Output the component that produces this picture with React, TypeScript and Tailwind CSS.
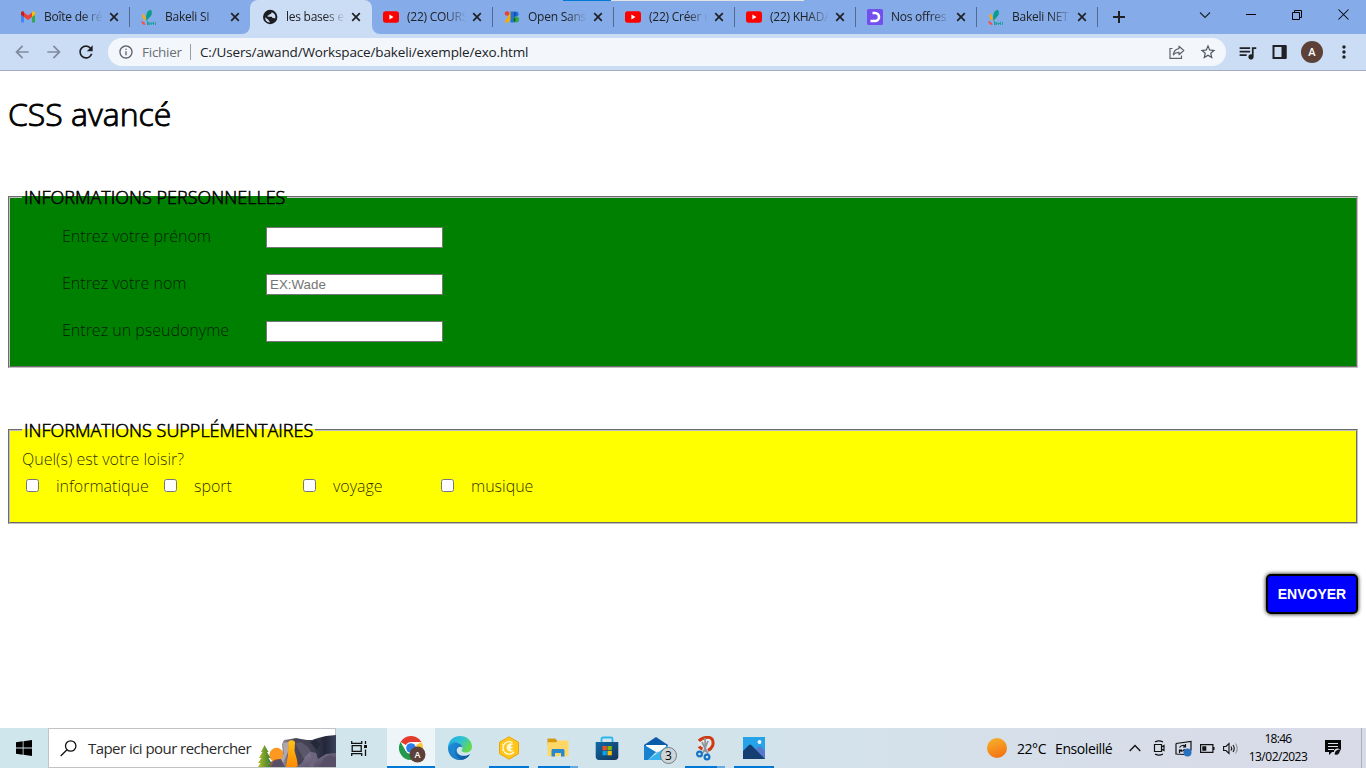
import type { ReactNode } from "react";
import {
  MdArrowBack,
  MdArrowForward,
  MdInfoOutline,
  MdMoreVert,
  MdQueueMusic,
  MdRefresh,
  MdStarBorder,
} from "react-icons/md";

/* ---------- Favicons ---------- */

function GmailIcon() {
  return (
    <svg width="16" height="16" viewBox="0 0 16 16">
      <path d="M1 4.200v8.200c0 .6.400 1 1 1h2V7z" fill="#4285f4" />
      <path d="M15 4.200v8.200c0 .6-.4 1-1 1h-2V7z" fill="#34a853" />
      <path d="M12 4.200V8l3-2.300V4c0-1.400-1.600-2.200-2.700-1.300z" fill="#fbbc04" />
      <path d="M4 8V3.500l4 3 4-3V8l-4 3z" fill="#ea4335" />
      <path d="M1 4v1.700L4 8V3L3.700 2.700C2.600 1.800 1 2.600 1 4z" fill="#c5221f" />
    </svg>
  );
}

function BakeliIcon() {
  return (
    <svg width="16" height="17" viewBox="0 0 16 17">
      <path d="M5.500 12C4.500 7 5.500 1.500 9.500.700c2.500 1.800 1.500 6-1.500 8.300-1 .9-1.800 1.900-2.500 3z" fill="#0a9c8c" />
      <path d="M4.500 12C1.500 10 .500 7.500 2 4.500c2.500 1.500 3 4 2.500 7.500z" fill="#f7a81b" />
      <path d="M4.500 16C2 16 .300 14.500.300 12c2.200.300 3.700 1.500 4.200 4z" fill="#f0544c" />
      <path d="M6.500 12v4M8.500 13.500V16M10.500 13.500V16M12.500 12.500V16M14.500 13v3M6.500 13.500h1.200V16M9 14h1M11 14.500h2" stroke="#1b9d97" strokeWidth=".9" fill="none" />
    </svg>
  );
}

function GlobeIcon() {
  return (
    <svg width="16" height="16" viewBox="0 0 16 16">
      <circle cx="8.200" cy="8" r="7.200" fill="#1b1d21" />
      <path d="M9.500 3.200c.2 1.300-.7 1.900-2 2-.3 1.100-1 1.300-2 1.400l.2 1.200h3.200c.900 0 1.400.5 1.500 1.300h1.300c.800 0 1.300.2 1.600.7a5.200 5.200 0 00-.7-4.600 5 5 0 00-3.100-2z" fill="#cbdcf5" />
      <path d="M3.200 8.200L6.600 11c0 .8.400 1.300 1.200 1.500v.900c-2.800-.1-4.800-2.300-4.600-5.200z" fill="#cbdcf5" />
    </svg>
  );
}

function YoutubeIcon() {
  return (
    <svg width="16" height="16" viewBox="0 0 16 16">
      <rect x="0" y="2.300" width="16" height="11.400" rx="2.600" fill="#f00" />
      <path d="M6.400 5.600v4.800L10.500 8z" fill="#fff" />
    </svg>
  );
}

function GoogleFontsIcon() {
  return (
    <svg width="16" height="16" viewBox="0 0 16 16">
      <path d="M.500 13.500L6.500 2.500H9v4L4.500 13.500z" fill="#f9ab00" />
      <circle cx="3" cy="4.500" r="2.300" fill="#ea4335" />
      <path d="M6.500 2.500h3v11h-3z" fill="#1a73e8" />
      <circle cx="12" cy="5" r="2.600" fill="#1a73e8" />
      <path d="M9.500 2.500a2.800 2.800 0 010 5.600z" fill="#174ea6" />
      <circle cx="12.200" cy="10.600" r="3" fill="#34a853" />
      <path d="M9.500 8a2.800 2.800 0 010 5.500z" fill="#0d652d" />
    </svg>
  );
}

function OffersIcon() {
  return (
    <svg width="16" height="16" viewBox="0 0 16 16">
      <rect width="16" height="16" rx="1.500" fill="#7350ee" />
      <path d="M5.500 4H8a4 4 0 010 8H3.500" fill="none" stroke="#fff" strokeWidth="2.600" />
    </svg>
  );
}

/* ---------- Browser chrome ---------- */

interface TabData {
  title: string;
  icon: ReactNode;
  active?: boolean;
  divider?: boolean;
}

const tabs: TabData[] = [
  { title: "Boîte de ré", icon: <GmailIcon />, divider: true },
  { title: "Bakeli SI", icon: <BakeliIcon /> },
  { title: "les bases e", icon: <GlobeIcon />, active: true },
  { title: "(22) COURS", icon: <YoutubeIcon />, divider: true },
  { title: "Open Sans", icon: <GoogleFontsIcon />, divider: true },
  { title: "(22) Créer u", icon: <YoutubeIcon />, divider: true },
  { title: "(22) KHADA", icon: <YoutubeIcon />, divider: true },
  { title: "Nos offres", icon: <OffersIcon />, divider: true },
  { title: "Bakeli NET", icon: <BakeliIcon />, divider: true },
];

function Tab({ title, icon, active, divider }: TabData) {
  return (
    <div
      className={`relative flex h-[34px] shrink-0 items-center pl-3 ${
        active ? "z-10 -mr-px w-[122px] rounded-t-lg bg-[#cbdcf5]" : "w-[121px]"
      }`}
    >
      <span className="flex w-4 shrink-0 items-center justify-center">{icon}</span>
      <span className="ml-2 w-[59px] shrink-0 overflow-hidden whitespace-nowrap text-[12px] leading-4 tracking-[-0.25px] text-[#202124] [mask-image:linear-gradient(to_right,#000_65%,transparent_100%)]">
        {title}
      </span>
      <svg className="ml-[6px] shrink-0" width="10" height="10" viewBox="0 0 10 10">
        <path d="M1.200 1.200l7.600 7.600M8.800 1.200L1.200 8.800" stroke="#202124" strokeWidth="1.700" />
      </svg>
      {divider && <span className="absolute right-[-1px] top-[7px] h-5 w-px bg-[#54698f]" />}
      {active && (
        <>
          <svg className="absolute bottom-0 left-[-8px]" width="8" height="8" viewBox="0 0 8 8">
            <path d="M8 0v8H0a8 8 0 008-8z" fill="#cbdcf5" />
          </svg>
          <svg className="absolute bottom-0 right-[-8px]" width="8" height="8" viewBox="0 0 8 8">
            <path d="M0 0v8h8a8 8 0 01-8-8z" fill="#cbdcf5" />
          </svg>
        </>
      )}
    </div>
  );
}

function TabStrip() {
  return (
    <div className="relative flex h-[34px] bg-[#85ace9] pl-2">
      {tabs.map((t) => (
        <Tab key={t.title} {...t} />
      ))}
      <svg className="ml-[16px] mt-[11px]" width="12" height="12" viewBox="0 0 12 12">
        <path d="M6 0v12M0 6h12" stroke="#202124" strokeWidth="2" />
      </svg>
      <div className="ml-auto flex h-[29px] items-center">
        <span className="flex w-[46px] justify-center">
          <svg width="12" height="8" viewBox="0 0 12 8">
            <path d="M1 1.500l5 5 5-5" fill="none" stroke="#202124" strokeWidth="1.100" />
          </svg>
        </span>
        <span className="flex w-[46px] justify-center">
          <span className="h-px w-[10px] bg-black" />
        </span>
        <span className="flex w-[46px] justify-center">
          <svg width="10" height="10" viewBox="0 0 10 10">
            <path d="M.500 2.500h7v7h-7zM2.500 2.500v-2h7v7h-2" fill="none" stroke="#000" />
          </svg>
        </span>
        <span className="flex w-[46px] justify-center">
          <svg width="11" height="11" viewBox="0 0 11 11">
            <path d="M.500.500l10 10M10.500.500l-10 10" stroke="#000" strokeWidth="1.050" />
          </svg>
        </span>
      </div>
      <div className="absolute left-[563px] top-0 flex h-px">
        <span className="w-12 bg-[#0078d7]" />
        <span className="w-[193px] bg-[#e3e3e3]" />
      </div>
    </div>
  );
}

function Toolbar() {
  return (
    <div className="flex h-[37px] items-center border-b border-[#a2adc3] bg-[#cbdcf5] pl-3">
      <MdArrowBack className="shrink-0" size={20} color="#808a9e" />
      <MdArrowForward className="ml-3 shrink-0" size={20} color="#808a9e" />
      <MdRefresh className="ml-3 shrink-0" size={20} color="#202124" />
      <div className="ml-3 flex h-7 w-[1118px] shrink-0 items-center rounded-full bg-[#f3f7fc] pl-[10px]">
        <MdInfoOutline size={16} color="#5f6368" />
        <span className="ml-2 w-[48px] text-[13.500px] tracking-[-0.25px] text-[#6a6e73]">Fichier</span>
        <span className="h-4 w-px bg-[#9a9da2]" />
        <span className="ml-[9px] whitespace-nowrap text-[13.500px] tracking-[-0.150px] text-[#202124]">
          C:/Users/awand/Workspace/bakeli/exemple/exo.html
        </span>
        <svg className="ml-auto" width="16" height="16" viewBox="0 0 16 16" fill="none" stroke="#5f6368" strokeWidth="1.200">
          <path d="M3.500 4.500h-2.500v9.900h11.500v-2.900" />
          <path d="M10 2.200l4.800 4.300-4.800 4.200V8.300c-2.600-.1-4.400.7-5.700 2.500.400-3.300 2.200-5.700 5.700-6.200z" strokeLinejoin="round" />
        </svg>
        <MdStarBorder className="ml-[14px] mr-[9px]" size={18} color="#50555b" />
      </div>
      <MdQueueMusic className="ml-[11px] shrink-0" size={21} color="#202124" />
      <svg className="ml-[14px] shrink-0" width="15" height="14" viewBox="0 0 15 14">
        <path d="M1.500 1h12v12h-12z" fill="none" stroke="#202124" strokeWidth="2" />
        <path d="M9.500 1h5v12h-5z" fill="#202124" />
      </svg>
      <span className="ml-[14px] flex size-[22px] shrink-0 items-center justify-center rounded-full bg-[#5d4037] text-[11px] font-semibold text-white">
        A
      </span>
      <MdMoreVert className="ml-[11px] shrink-0" size={20} color="#202124" />
    </div>
  );
}

/* ---------- Page ---------- */

const fields = [
  { label: "Entrez votre prénom" },
  { label: "Entrez votre nom", placeholder: "EX:Wade" },
  { label: "Entrez un pseudonyme" },
];

const hobbies = ["informatique", "sport", "voyage", "musique"];

function FormPage() {
  return (
    <main className="h-[657px] bg-white px-2 pt-[21px] font-['Open_Sans',sans-serif] text-base font-light text-black">
      <h1 className="text-[32px] leading-[44px] [-webkit-text-stroke:0.9px_#000]">CSS avancé</h1>
      <form className="mt-[49px]">
        <fieldset className="h-[183px] bg-[#008000] px-3 [border:2px_groove_#c0c0c0]">
          <legend className="h-[24px] px-[2px] text-[18px] leading-[25px] [-webkit-text-stroke:0.550px_#000]">
            INFORMATIONS PERSONNELLES
          </legend>
          <div className="flex flex-col gap-[26px] pl-10 pt-[18px]">
            {fields.map((f) => (
              <div key={f.label} className="flex h-[21px] items-center">
                <label className="mb-1 w-[204px] leading-[22px] text-black/80">{f.label}</label>
                <input
                  type="text"
                  placeholder={f.placeholder}
                  className="h-[21px] w-[177px] border border-[#767676] bg-white px-[3px] font-['Liberation_Sans',sans-serif] text-[13.333px] font-normal placeholder:text-[#757575]"
                />
              </div>
            ))}
          </div>
        </fieldset>
        <fieldset className="mt-[50px] h-[106px] bg-[#ffff00] px-3 [border:2px_groove_#c0c0c0]">
          <legend className="h-[24px] px-[2px] text-[18px] leading-[25px] [-webkit-text-stroke:0.550px_#000]">
            INFORMATIONS SUPPLÉMENTAIRES
          </legend>
          <p className="mt-[6px] leading-[22px] text-black/85">Quel(s) est votre loisir?</p>
          <div className="mt-[5px] grid grid-cols-[138px_139px_138px_138px] text-black/85">
            {hobbies.map((h) => (
              <label key={h} className="flex h-[22px] items-center pl-1">
                <input type="checkbox" className="mb-px size-[13px]" />
                <span className="ml-[17px]">{h}</span>
              </label>
            ))}
          </div>
        </fieldset>
        <button
          type="button"
          className="ml-auto mt-[50px] block h-10 w-[92px] rounded-[5px] border-2 border-black bg-[#0000ff] font-['Liberation_Sans',sans-serif] text-[14px] font-bold text-white shadow-[0_0_4px_#000]"
        >
          ENVOYER
        </button>
      </form>
    </main>
  );
}

/* ---------- Taskbar ---------- */

function SearchArt() {
  return (
    <svg width="78" height="32" viewBox="0 0 78 32">
      <defs>
        <linearGradient id="rock" x1="0" y1="0" x2="1" y2="0">
          <stop offset="0" stopColor="#a39aa6" />
          <stop offset=".25" stopColor="#4b4658" />
          <stop offset=".6" stopColor="#3d3f50" />
          <stop offset=".8" stopColor="#23273a" />
          <stop offset="1" stopColor="#3b4158" />
        </linearGradient>
        <linearGradient id="stone" x1="0" y1="0" x2="1" y2="1">
          <stop offset="0" stopColor="#8a8299" />
          <stop offset="1" stopColor="#4a435c" />
        </linearGradient>
        <linearGradient id="fall" x1="0" y1="0" x2="0" y2="1">
          <stop offset="0" stopColor="#ffc21a" />
          <stop offset="1" stopColor="#ff8a00" />
        </linearGradient>
        <linearGradient id="tree" x1="0" y1="0" x2="1" y2="0">
          <stop offset="0" stopColor="#b5bd25" />
          <stop offset="1" stopColor="#2d7936" />
        </linearGradient>
      </defs>
      <circle cx="18.500" cy="20" r="7.200" fill="#ff9820" />
      <path d="M9 32c2-5 7-8 13-8l4 8z" fill="#8f5a42" />
      <path d="M22 32l3-12 -1-11 2-4 7-1 5-1 5 1 6 1 5 0 6-2 8-2 10-1v32z" fill="url(#rock)" />
      <path d="M37 8l6-1 7 5 6 9-5 4-6-2-3-6z" fill="#5b5669" />
      <path d="M52 7l6-3 4 5-3 6z" fill="#252839" />
      <path d="M25 8l6-1-1 10-4 9-4 6h-3l4-8 3-6z" fill="#b3a8a8" />
      <path d="M30.500 6.500c2-2 6-1.800 6.500 1l-.5 8 2.500 9.500 1 7H28l2-12z" fill="url(#fall)" />
      <path d="M38 32l6-4 3-6 5-5 6 1 2 6 8-5 10-1v14z" fill="url(#stone)" />
      <path d="M13 32l3-6 7-2 4 8zM62 32l4-9 6-3 6 3v9z" fill="#574e68" />
      <path d="M52 17l5 1 2 6-4 8h-4l3-8z" fill="#6d657d" />
      <path d="M6.500 10l4 7H9l3.500 6h-2l3 5h-3l2.500 4H0l2.500-4H0l3.500-5H1l3.500-6H3z" fill="url(#tree)" />
    </svg>
  );
}

function ChromeIcon() {
  return (
    <svg width="27" height="27" viewBox="0 0 27 27">
      <circle cx="12" cy="12" r="12" fill="#fff" />
      <path d="M12 12L1.600 6A12 12 0 0122.400 6H12z" fill="#e33b2e" />
      <path d="M12 12L22.400 6A12 12 0 0112 24l5.200-9z" fill="#fcc934" />
      <path d="M12 12l5.200 3L12 24A12 12 0 011.600 6l5.200 9z" fill="#229a4a" />
      <circle cx="12" cy="12" r="6" fill="#fff" />
      <circle cx="12" cy="12" r="4.800" fill="#2b7de9" />
      <circle cx="18.500" cy="18.500" r="8" fill="#5d4037" />
      <text x="18.500" y="22" fontSize="9" fontWeight="600" textAnchor="middle" fill="#fff" fontFamily="Open Sans, sans-serif">A</text>
    </svg>
  );
}

function EdgeIcon() {
  return (
    <svg width="24" height="24" viewBox="0 0 24 24">
      <defs>
        <linearGradient id="edgeTop" x1="0" y1="0" x2="1" y2=".5">
          <stop offset="0" stopColor="#1ba7e8" />
          <stop offset=".55" stopColor="#2fc3d2" />
          <stop offset="1" stopColor="#63d94c" />
        </linearGradient>
        <linearGradient id="edgeLow" x1="0" y1="0" x2="1" y2="1">
          <stop offset="0" stopColor="#1f97e0" />
          <stop offset="1" stopColor="#0c4d9a" />
        </linearGradient>
      </defs>
      <path d="M0 12C0 5 5 0 12 0s12 5 12 10.500c0 4-3 6-6.500 6-2.500 0-4-.9-4-1.900 0-.8 1-1 1-2.800C14.500 9 11.500 7 8.500 7 4 7 .800 9.500 0 12z" fill="url(#edgeTop)" />
      <path d="M0 12c.500-3.500 4-5.500 7.500-5.500 3.500 0 7 2.300 7 5.300-2-2.200-5.800-.8-5.800 2.700 0 4.500 7 7.500 13.500 3.500C20 22 16.500 24 12 24 5 24 0 18.500 0 12z" fill="url(#edgeLow)" />
      <path d="M8 10c-3.500 5-.500 12 6 13.500-2 .700-6 .5-9-2-4-4-3-10 3-11.500z" fill="#1f8fd8" opacity=".6" />
    </svg>
  );
}

function HexIcon() {
  return (
    <svg width="22" height="24" viewBox="0 0 22 24">
      <path d="M11 .800l9.500 5.400v11.500L11 23.200l-9.500-5.500V6.200z" fill="#ffc61a" stroke="#eba40b" strokeWidth="1" strokeLinejoin="round" />
      <path d="M14.500 6.500C11 4.500 7 6 5.500 9.500c-1 3 0 6.500 3 8 2.700 1.200 6 .5 7.300-1.500" fill="none" stroke="#fff8d8" strokeWidth="1.400" />
      <path d="M16 8.500c-2.500-2-6-1.300-7 1-1.200 3 .5 5.700 3 6 1.500.200 3-.2 3.700-1-2 0-3.200-.8-3.400-2.200 1.300.5 2.500.2 3.200-.6-1.500-.2-2.500-.8-2.500-1.800 0-.9 1-1.600 3-1.400z" fill="#fff8d8" />
      <path d="M4 8l2 1M4.200 14l2-.5" stroke="#fff8d8" strokeWidth="1" />
    </svg>
  );
}

function FolderIcon() {
  return (
    <svg width="22" height="20" viewBox="0 0 22 20">
      <path d="M.500 2.500V1.300C.500.800.800.500 1.300.500h7L10.500 3v4H.500z" fill="#d79a13" />
      <path d="M.500 4.200H9l2-1.700h9.500c.500 0 1 .4 1 1v14.700H.500z" fill="#ffd766" />
      <path d="M4.500 18.500v-6c0-.9.600-1.500 1.500-1.500h10c.900 0 1.500.6 1.500 1.500v6H14V15H8v3.500z" fill="#2887cf" />
    </svg>
  );
}

function StoreIcon() {
  return (
    <svg width="24" height="25" viewBox="0 0 24 25">
      <defs>
        <linearGradient id="store" x1="0" y1="0" x2="1" y2="1">
          <stop offset="0" stopColor="#0f6ca9" />
          <stop offset="1" stopColor="#153257" />
        </linearGradient>
      </defs>
      <path d="M6.500 7V3c0-.9.600-1.500 1.500-1.500h8c.900 0 1.500.6 1.500 1.500v4" fill="none" stroke="#2bb5ec" strokeWidth="1.800" />
      <path d="M.700 6h22.600v14.500c0 2-1.300 3.500-3.300 3.500H4c-2 0-3.300-1.500-3.300-3.500z" fill="url(#store)" />
      <path d="M7.500 10h4.300v4.300H7.500z" fill="#f25022" />
      <path d="M12.500 10h4.300v4.300h-4.300z" fill="#7fba00" />
      <path d="M7.500 15h4.300v4.300H7.500z" fill="#00a4ef" />
      <path d="M12.500 15h4.300v4.300h-4.300z" fill="#ffb900" />
    </svg>
  );
}

function MailIcon() {
  return (
    <div className="relative">
      <svg width="24" height="24" viewBox="0 0 24 24">
        <path d="M0 9l12-8 12 8v5H0z" fill="#0b5ba8" />
        <path d="M2 9h20v5l-10 4-10-4z" fill="#fff" />
        <path d="M0 9l12 7-8 8H0z" fill="#1681d0" />
        <path d="M24 9l-20 15h19c.600 0 1-.4 1-1z" fill="#35b3ee" />
        <path d="M0 9l12 8 2-1.200" fill="none" stroke="#1b78c3" strokeWidth=".6" />
      </svg>
      <span className="absolute left-[16px] top-[11px] flex size-[17px] items-center justify-center rounded-full border border-[#777c80] bg-[#ccd5da] text-[12px] leading-none text-black">
        3
      </span>
    </div>
  );
}

function SnipIcon() {
  return (
    <svg width="20" height="25" viewBox="0 0 20 25">
      <ellipse cx="10.500" cy="8" rx="7.500" ry="6.500" fill="#e4e7ea" />
      <path d="M4 5C7 1 15.500 0 17.300 3.500c2 4.500 0 9-4.300 11M4 10.500c1 1.500 2 2 3.500 2.500" fill="none" stroke="#cf3a12" strokeWidth="3" />
      <path d="M10 2l.5 14M13 5L8 17M7 6l6 12" stroke="#8e979d" strokeWidth="1.700" />
      <circle cx="4.500" cy="18" r="2.400" fill="none" stroke="#1674c4" strokeWidth="2.200" />
      <circle cx="12" cy="21" r="2.400" fill="none" stroke="#1674c4" strokeWidth="2.200" />
    </svg>
  );
}

function PhotosIcon() {
  return (
    <svg width="22" height="22" viewBox="0 0 22 22">
      <path d="M0 0h22v22H0z" fill="#25a3e8" />
      <path d="M12 12l5-3 5 5v8H12z" fill="#5679ce" />
      <path d="M0 14l6-6c.700-.7 1.500-.7 2.200 0L22 22H0z" fill="#153e72" />
      <circle cx="16.500" cy="5" r="2" fill="#e8f4fb" />
    </svg>
  );
}

interface TaskItem {
  id: string;
  icon: ReactNode;
  active?: boolean;
  line?: "full" | "single" | "stacked";
}

const taskItems: TaskItem[] = [
  { id: "chrome", icon: <div className="pl-[3px] pt-[3px]"><ChromeIcon /></div>, active: true, line: "full" },
  { id: "edge", icon: <EdgeIcon /> },
  { id: "hex", icon: <HexIcon />, line: "single" },
  { id: "files", icon: <FolderIcon />, line: "stacked" },
  { id: "store", icon: <div className="pr-px"><StoreIcon /></div> },
  { id: "mail", icon: <MailIcon /> },
  { id: "snip", icon: <SnipIcon />, line: "stacked" },
  { id: "photos", icon: <PhotosIcon />, line: "single" },
];

function TaskButton({ icon, active, line }: TaskItem) {
  return (
    <div className={`relative flex h-10 w-12 items-center justify-center ${active ? "bg-[#eef5f8]" : ""}`}>
      {icon}
      {line === "full" && <span className="absolute inset-x-0 bottom-0 h-[2px] bg-[#0078d7]" />}
      {line === "single" && <span className="absolute inset-x-1 bottom-0 h-[2px] bg-[#0078d7]" />}
      {line === "stacked" && (
        <span className="absolute inset-x-1 bottom-0 flex h-[2px]">
          <span className="w-8 bg-[#0078d7]" />
          <span className="w-2 bg-[#65a9e2]" />
        </span>
      )}
    </div>
  );
}

function Tray() {
  return (
    <div className="ml-auto flex h-10 items-center text-black">
      <span className="size-5 rounded-full bg-linear-160 from-[#f6b42c] to-[#f2670f]" />
      <span className="ml-[10px] w-[38px] whitespace-nowrap text-[14px] tracking-[-0.45px]">22°C</span>
      <span className="w-[74px] whitespace-nowrap text-[14px] tracking-[-0.4px]">Ensoleillé</span>
      <svg width="12" height="8" viewBox="0 0 12 8">
        <path d="M.700 7L6 1.500 11.300 7" fill="none" stroke="#111" strokeWidth="1.300" />
      </svg>
      <svg className="ml-[12px]" width="13" height="16" viewBox="0 0 13 16" fill="none" stroke="#111" strokeWidth="1.200">
        <path d="M1.500 4.500h7v7h-7zM8.500 7l2.500-1.500v5L8.500 9M2 2c2.500-1.500 5.500-1.500 8 0M2 14c2.500 1.500 5.500 1.500 8 0" />
      </svg>
      <svg className="ml-[9px]" width="17" height="17" viewBox="0 0 17 17" fill="none" stroke="#111" strokeWidth="1.200">
        <path d="M1 3.500l15-2v9M9 14.500l-8-.5V3.500" />
        <path d="M4.500 7.500C6 5 9 5 10.500 6.500M10.500 4v3H8M9.500 9c-1 2.500-3.500 2.500-5 1M4.500 13v-3H7" />
        <circle cx="12.500" cy="12.500" r="4" fill="#2870bd" stroke="none" />
      </svg>
      <svg className="ml-[8px]" width="15" height="9" viewBox="0 0 15 9">
        <path d="M.600.600h12.300v7.800H.600z" fill="none" stroke="#111" strokeWidth="1.200" />
        <path d="M2.300 2.300h4v4.400h-4zM13 3h1.500v3H13z" fill="#111" />
      </svg>
      <svg className="ml-[8px]" width="17" height="13" viewBox="0 0 17 13" fill="none" stroke="#111">
        <path d="M.600 4.500H3L6 1.500v10L3 8.500H.600z" strokeWidth="1.100" />
        <path d="M8 4.500q1.500 2 0 4M10 3q2.500 3.500 0 7" strokeWidth="1.100" />
        <path d="M12.500 1.500q3.500 5 0 10" stroke="#888" />
      </svg>
      <div className="ml-2 flex w-[60px] flex-col items-center text-[12px] leading-[18px]">
        <span className="tracking-[-0.7px]">18:46</span>
        <span className="tracking-[-0.5px]">13/02/2023</span>
      </div>
      <svg className="ml-[17px]" width="17" height="16" viewBox="0 0 17 16">
        <path d="M0 0h16v12H7l-3 3v-3H0z" fill="#080808" />
        <path d="M3 3.500h10M3 6.500h10M3 9.500h6" stroke="#dbe1ea" />
        <circle cx="12.500" cy="12" r="3.600" fill="#d9dfe9" />
        <path d="M9.700 14.500c0-2.500 1-5 5.500-5-.5 4-2 6-5.500 5z" fill="#111" />
      </svg>
      <span className="ml-[19px] h-10 w-px bg-[#a8b0b9]" />
      <span className="w-1" />
    </div>
  );
}

function Taskbar() {
  return (
    <div className="flex h-10 bg-linear-to-r from-[#cfe6ed] via-[#d2e4eb] to-[#d9dae8]">
      <div className="flex w-12 items-center justify-center">
        <svg width="16" height="16" viewBox="0 0 16 16" fill="#000">
          <path d="M0 2.200L6.700 1.300v6.300H0zM7.500 1.200L16 0v7.600H7.500zM0 8.400h6.700v6.300L0 13.800zM7.500 8.400H16V16l-8.500-1.200z" />
        </svg>
      </div>
      <div className="flex w-72 items-center border border-[#c0c4c6] bg-white pl-[11px]">
        <svg className="shrink-0" width="17" height="17" viewBox="0 0 17 17" fill="none" stroke="#111" strokeWidth="1.300">
          <circle cx="10.700" cy="6" r="5.200" />
          <path d="M7 9.700L.700 16" />
        </svg>
        <span className="ml-[11px] w-[168px] shrink-0 whitespace-nowrap text-[15px] tracking-[-0.55px] text-[#2b2b2b]">
          Taper ici pour rechercher
        </span>
        <span className="ml-[2px] flex self-end">
          <SearchArt />
        </span>
      </div>
      <div className="flex w-[51px] items-center pl-[15px]">
        <svg width="17" height="15" viewBox="0 0 17 15" fill="none" stroke="#111" strokeWidth="1.300">
          <path d="M.700 0v2.400h10V0M.700 15v-2.400h10V15M1.200 4.600h9v5.800h-9zM14.500 0v3M14.500 8.500V15" />
          <path d="M13 4h3v3h-3z" fill="#111" stroke="none" />
        </svg>
      </div>
      <div className="flex gap-px">
        {taskItems.map((t) => (
          <TaskButton key={t.id} {...t} />
        ))}
      </div>
      <Tray />
    </div>
  );
}

export default function App() {
  return (
    <div className="flex h-[768px] w-[1366px] flex-col overflow-hidden font-['Open_Sans','Noto_Sans',sans-serif]">
      <TabStrip />
      <Toolbar />
      <FormPage />
      <Taskbar />
    </div>
  );
}
